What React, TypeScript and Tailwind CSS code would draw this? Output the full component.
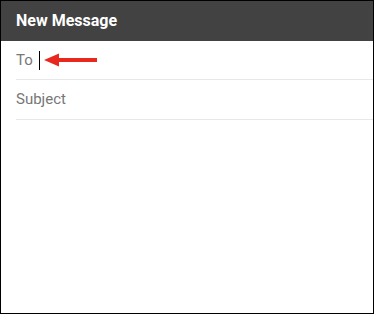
import React from "react";

export default function App() {
  return (
    <div className="w-[374px] h-[314px] border border-black bg-white flex flex-col overflow-hidden" style={{ fontFamily: "Roboto, 'Liberation Sans', sans-serif" }}>
      <div className="h-[40px] bg-[#424242] flex items-center pl-[15px] shrink-0">
        <span className="text-white font-bold text-[16px] leading-none">New Message</span>
      </div>
      <div className="pl-[15px] flex flex-col">
        <div className="h-[39px] border-b border-[#e8e8e8] flex items-center">
          <span className="text-[15px] text-[#777777] leading-none">To</span>
          <span className="ml-[6px] w-px h-[19px] bg-black"></span>
          <svg width="56" height="14" viewBox="0 0 56 14" className="ml-[4px]">
            <path d="M0 7 L15 0.5 L15 5 L53 5 L53 9 L15 9 L15 13.5 Z" fill="#e8281e" />
          </svg>
        </div>
        <div className="h-[40px] border-b border-[#e8e8e8] flex items-center">
          <span className="text-[15px] text-[#777777] leading-none">Subject</span>
        </div>
      </div>
    </div>
  );
}
